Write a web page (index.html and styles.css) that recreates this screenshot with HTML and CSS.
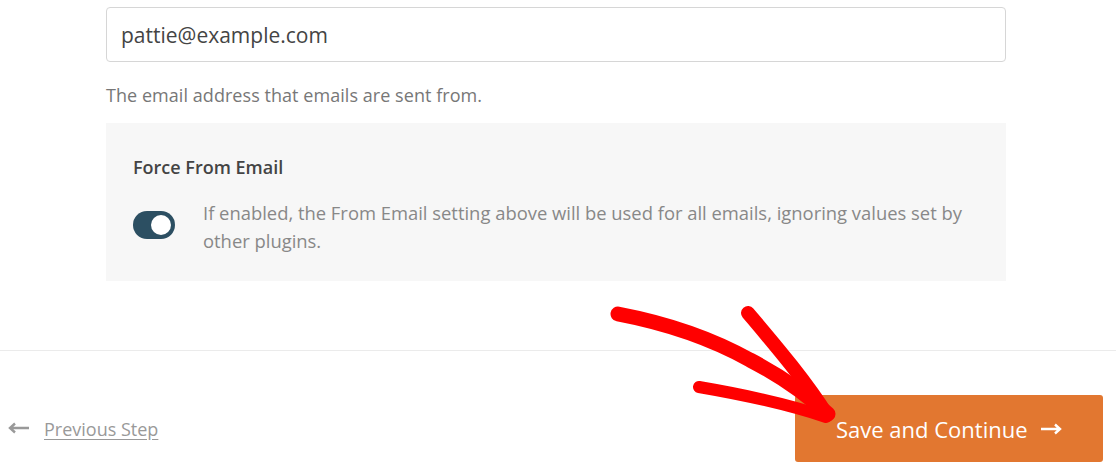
FILE: index.html
```html
<!DOCTYPE html>
<html>
<head>
<meta charset="utf-8">
<link rel="stylesheet" href="styles.css">
</head>
<body>
<div class="page">
  <main class="main">
    <div class="input">pattie@example.com</div>
    <p class="help">The email address that emails are sent from.</p>
    <section class="box">
      <h3 class="box-title">Force From Email</h3>
      <div class="toggle-row">
        <span class="toggle"><span class="knob"></span></span>
        <p class="toggle-desc">If enabled, the From Email setting above will be used for all emails, ignoring values set by other plugins.</p>
      </div>
    </section>
  </main>
  <footer class="footer">
    <a class="prev">
      <svg class="prev-arrow" width="22" height="12" viewBox="0 0 22 12"><path d="M21 6 H3 M7 1.5 L2 6 L7 10.5" fill="none" stroke="#999" stroke-width="2.4" stroke-linejoin="miter"/></svg>
      <span class="prev-text">Previous Step</span>
    </a>
    <button class="save">Save and Continue
      <svg class="save-arrow" width="21" height="12" viewBox="0 0 21 12"><path d="M0 6 H18 M14 1.5 L19 6 L14 10.5" fill="none" stroke="#fff" stroke-width="2.4"/></svg>
    </button>
  </footer>
  <svg class="scribble" width="1116" height="466" viewBox="0 0 1116 466">
    <g fill="none" stroke="#ff0000" stroke-linecap="round" stroke-linejoin="round">
      <path d="M618 314 C 660 322, 705 335, 750 360 C 775 373, 800 388, 828 414" stroke-width="15"/>
      <path d="M748 313 C 775 345, 805 380, 827 415" stroke-width="14"/>
      <path d="M699 387 C 740 394, 790 405, 826 417" stroke-width="12"/>
    </g>
  </svg>
</div>
</body>
</html>
```
FILE: styles.css
```css
* { box-sizing: border-box; }
html, body { margin: 0; padding: 0; background: #fff; }
body { font-family: "Open Sans", "Noto Sans", sans-serif; }
.page { position: relative; width: 1116px; height: 466px; overflow: hidden; }
.main { padding: 7px 0 0 106px; width: 1006px; height: 350px; }
.input {
  height: 55px; border: 1px solid #d6d6d6; border-radius: 4px;
  padding: 0 14px; display: flex; align-items: center;
  font-size: 21px; color: #444;
}
.help { margin: 21px 0 0; font-size: 18px; color: #777; line-height: 24px; letter-spacing: 0.05px; }
.box { margin-top: 16px; background: #f7f7f7; padding: 32px 27px 26px; height: 158px; }
.box-title { margin: 0; font-size: 18px; font-weight: 600; color: #444; line-height: 24px; }
.toggle-row { display: flex; gap: 28px; margin-top: 20px; align-items: flex-start; }
.toggle {
  flex: none; width: 42px; height: 28px; border-radius: 14px; background: #2c4f62;
  margin-top: 12px; position: relative;
}
.knob { position: absolute; right: 4px; top: 4px; width: 20px; height: 20px; border-radius: 50%; background: #fff; }
.toggle-desc { margin: 0; font-size: 18.4px; color: #888; line-height: 28px; }
.footer {
  border-top: 1px solid #ebebeb; height: 116px;
  display: flex; justify-content: space-between; align-items: flex-start;
  padding: 44px 13px 0 8px;
}
.prev { display: flex; align-items: center; gap: 14px; height: 67px; color: #999; text-decoration: none; }
.prev-arrow { flex: none; margin-top: -2px; }
.prev-text { font-size: 18px; text-decoration: underline; text-underline-offset: 3px; }
.save {
  width: 308px; height: 67px; border: none; border-radius: 3px; background: #e27730;
  color: #fff; font-family: "Open Sans", "Noto Sans", sans-serif; font-size: 22px;
  display: flex; align-items: center; padding: 0 0 0 41px; gap: 13px;
}
.save-arrow { flex: none; }
.scribble { position: absolute; left: 0; top: 0; pointer-events: none; }
```
